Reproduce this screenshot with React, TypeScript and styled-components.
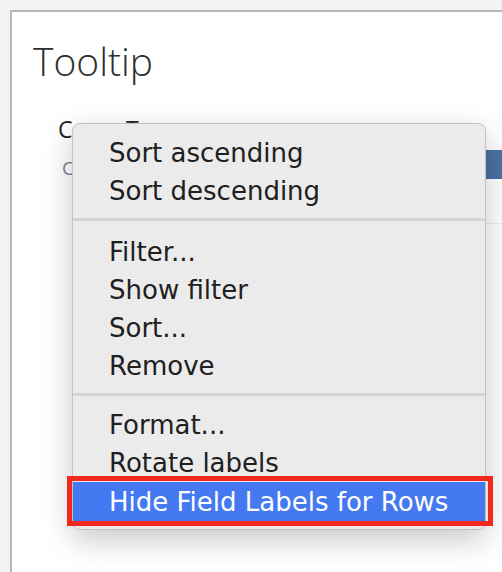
import { createGlobalStyle, styled } from "styled-components";

const GlobalStyle = createGlobalStyle`
    html, body {
        margin: 0;
        padding: 0;
        background: #f2f2f2;
        overflow: hidden;
    }
`

const Page = styled.div`
    position: relative;
    width: 502px;
    height: 572px;
    padding: 10px 0 0 10px;
    box-sizing: border-box;
    overflow: hidden;
`

const Panel = styled.div`
    width: 520px;
    height: 600px;
    background: #ffffff;
    border-left: 2px solid #b7b7b7;
    border-top: 2px solid #b7b7b7;
    padding: 26px 0 0 21px;
    box-sizing: border-box;
`

const Title = styled.h1`
    margin: 0;
    font-family: "Open Sans", sans-serif;
    font-weight: 300;
    font-size: 39px;
    line-height: 46px;
    color: #2e2e2e;
`

const Sheet = styled.div`
    display: flex;
    flex-direction: column;
    margin-top: 30px;
    padding-left: 25px;
`

const FieldLabel = styled.div`
    font-family: "Open Sans", sans-serif;
    font-size: 23px;
    line-height: 30px;
    color: #222;
`

const Row = styled.div`
    display: grid;
    grid-template-columns: 110px 1fr;
`

const RowLabel = styled.span`
    display: flex;
    align-items: center;
    height: 48px;
    padding-left: 4px;
    font-family: "Open Sans", sans-serif;
    font-size: 19px;
    color: #7c8290;
`

const Cell = styled.div`
    display: flex;
    align-items: flex-start;
    justify-content: flex-end;
    height: 80px;
    padding-top: 6px;
    box-sizing: border-box;
    border-bottom: 1px solid #ececec;
`

const Bar = styled.div`
    width: 200px;
    height: 29px;
    background: #4a72a2;
`

const Menu = styled.div`
    position: absolute;
    left: 72px;
    top: 123px;
    width: 414px;
    box-sizing: border-box;
    background: #ebebeb;
    border: 1px solid #c2c2c2;
    border-radius: 8px;
    padding: 10px 0 7px;
    box-shadow: 0 10px 30px rgba(0, 0, 0, 0.22);
    font-family: "DejaVu Sans", sans-serif;
    font-size: 26px;
    color: #202020;
`

const Item = styled.div<{ $active?: boolean }>`
    height: ${(p) => (p.$active ? 40 : 38)}px;
    line-height: ${(p) => (p.$active ? 40 : 38)}px;
    padding-left: 36px;
    white-space: nowrap;
    background: ${(p) => (p.$active ? "#4479f2" : "transparent")};
    color: ${(p) => (p.$active ? "#ffffff" : "#202020")};
`

const Separator = styled.div<{ $after: number }>`
    height: 3px;
    background: #d4d4d4;
    margin: 8px 0 ${(p) => p.$after}px;
`

const Callout = styled.div`
    position: absolute;
    left: 67px;
    top: 476px;
    width: 426px;
    height: 50px;
    box-sizing: border-box;
    border: 5px solid #f2281d;
    pointer-events: none;
`

const sections = [
    ["Sort ascending", "Sort descending"],
    ["Filter...", "Show filter", "Sort...", "Remove"],
    ["Format...", "Rotate labels", "Hide Field Labels for Rows"],
]

function App() {
    return (
        <>
            <GlobalStyle />
            <Page>
                <Panel>
                    <Title>Tooltip</Title>
                    <Sheet>
                        <FieldLabel>Cover Type</FieldLabel>
                        <Row>
                            <RowLabel>Classic</RowLabel>
                            <Cell>
                                <Bar />
                            </Cell>
                        </Row>
                    </Sheet>
                </Panel>
                <Menu>
                    {sections.map((items, i) => (
                        <div key={i}>
                            {i > 0 && <Separator $after={i === 1 ? 12 : 10} />}
                            {items.map((label) => (
                                <Item key={label} $active={label.startsWith("Hide")}>
                                    {label}
                                </Item>
                            ))}
                        </div>
                    ))}
                </Menu>
                <Callout />
            </Page>
        </>
    );
}

export default App;
